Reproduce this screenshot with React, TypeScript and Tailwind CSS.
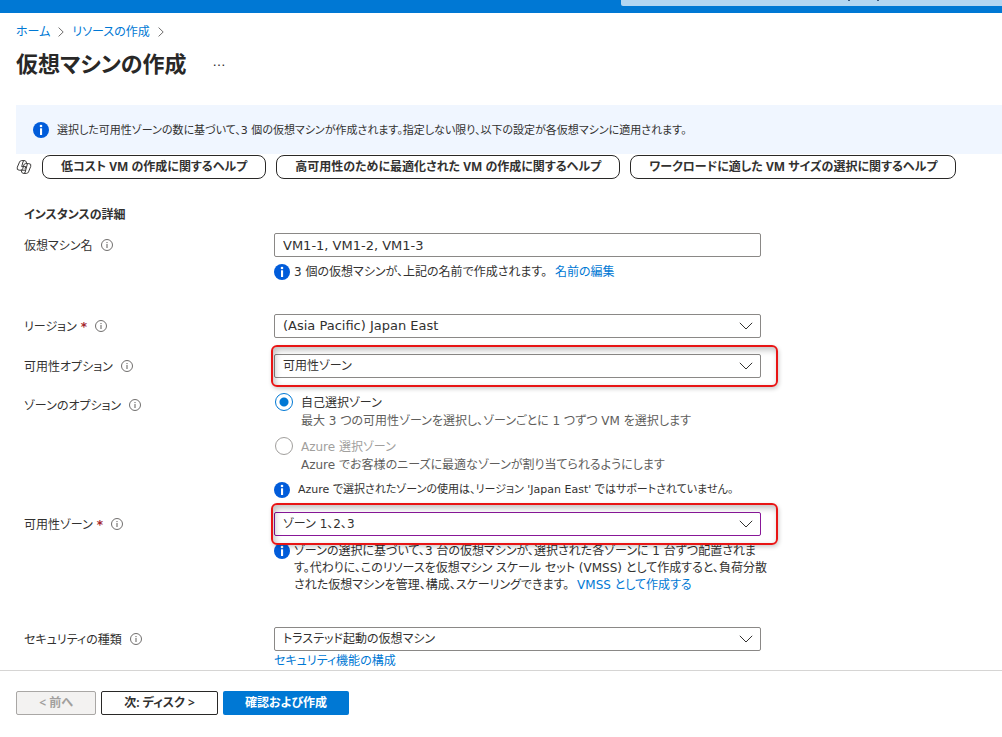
import React from "react";

const link = "text-[#0078d4] hover:underline";
const control =
  "block h-6 w-full appearance-none rounded-[2px] border bg-white px-2 leading-4 text-[#323130] outline-none";

function InfoBadge() {
  return (
    <svg className="size-4 shrink-0" viewBox="0 0 16 16" aria-hidden="true">
      <circle cx="8" cy="8" r="8" fill="#015cda" />
      <circle cx="8" cy="4" r="1.3" fill="#fff" />
      <rect x="7" y="6.3" width="2.1" height="6.7" fill="#fff" />
    </svg>
  );
}

function InfoOutline() {
  return (
    <svg className="size-3 shrink-0" viewBox="0 0 12 12" fill="none" aria-hidden="true">
      <circle cx="6" cy="6" r="5.5" stroke="#605e5c" strokeWidth="0.9" />
      <rect x="5.5" y="5" width="1" height="4" fill="#605e5c" />
      <rect x="5.5" y="3" width="1" height="1.1" fill="#605e5c" />
    </svg>
  );
}

function Chevron() {
  return (
    <svg className="h-2 w-3.5" viewBox="0 0 14 8" fill="none" aria-hidden="true">
      <path d="M0.8 0.8 L7 7 L13.2 0.8" stroke="#323130" strokeWidth="1" />
    </svg>
  );
}

function Crumb() {
  return (
    <svg className="h-2.5 w-1.5" viewBox="0 0 6 10" fill="none" aria-hidden="true">
      <path d="M0.6 0.6 L5.2 5 L0.6 9.4" stroke="#605e5c" strokeWidth="0.9" />
    </svg>
  );
}

function CopilotIcon() {
  return (
    <svg className="size-4 shrink-0" viewBox="0 0 16 16" fill="none" stroke="#3b3a39" strokeWidth="1" strokeLinejoin="round" aria-hidden="true">
      <path d="M10.6 4.4 L10.2 2.9 Q9.8 1.6 8.5 1.6 H5.6 Q4.1 1.6 3.5 3.1 L1.3 8.2 Q0.4 11.2 3.2 11.2 H5.2 L5.7 13 Q6.1 14.4 7.5 14.4 H10.4 Q11.9 14.4 12.5 12.9 L14.7 7.5 Q15.6 4.6 12.8 4.6 H9.6 Q8.3 4.6 7.9 5.9 L6.7 9.8 Q6.3 11.2 5 11.2" />
      <path d="M8.5 1.6 Q7.4 1.6 7 2.9 L5.7 7.6 H9.8 L9 9.8 M7.5 14.4 Q8.8 14.4 9.2 13.1 L11.4 4.8 M5.4 11.2 H9.7" />
    </svg>
  );
}

function Row({ id, label, required, children }: { id: string; label: string; required?: boolean; children: React.ReactNode }) {
  return (
    <div className="grid grid-cols-[250px_minmax(0,1fr)]">
      <div className="flex h-6 items-center">
        <label htmlFor={id} className="pt-0.5">{label}</label>
        {required && <span className="ml-1 pt-0.5 font-bold text-[#a4262c]">*</span>}
        <span className="ml-2">
          <InfoOutline />
        </span>
      </div>
      <div className="min-w-0">{children}</div>
    </div>
  );
}

type SelectProps = { id: string; value: string; active?: boolean; marked?: boolean; large?: boolean };

function Select({ id, value, active, marked, large }: SelectProps) {
  return (
    <div className="relative max-w-[487px]">
      <select
        id={id}
        defaultValue={value}
        className={`${control} ${active ? "border-[#881798]" : "border-[#8a8886]"} ${large ? "text-[13px]" : "text-[12px]"}`}
      >
        <option>{value}</option>
      </select>
      <span className="pointer-events-none absolute top-2 right-2">
        <Chevron />
      </span>
      {marked && (
        <span className="pointer-events-none absolute -top-[9px] -right-[17px] -bottom-[9px] -left-[3px] rounded-[6px] border-2 border-[#e81515] shadow-[1px_2px_4px_rgba(0,0,0,0.2),inset_2px_3px_6px_rgba(0,0,0,0.25)]" />
      )}
    </div>
  );
}

type ZoneOptionProps = { id: string; title: string; detail: string; checked?: boolean; disabled?: boolean };

function ZoneOption({ id, title, detail, checked, disabled }: ZoneOptionProps) {
  return (
    <div className="flex gap-2">
      <input
        id={id}
        type="radio"
        name="zone-option"
        defaultChecked={checked}
        disabled={disabled}
        className="ml-px size-[18px] shrink-0 appearance-none rounded-full border border-[#a19f9d] bg-white checked:border-[#0078d4] checked:bg-[radial-gradient(circle,#0078d4_4px,transparent_5px)]"
      />
      <div className="pt-px">
        <label htmlFor={id} className={`block leading-[18px] ${disabled ? "text-[#a19f9d]" : ""}`}>
          {title}
        </label>
        <p className="leading-[18px] text-[#605e5c]">{detail}</p>
      </div>
    </div>
  );
}

function Pill({ children }: { children: React.ReactNode }) {
  return (
    <button className="flex h-6 items-center rounded-lg border border-[#292827] bg-white px-[18px] pb-0.5 font-['Noto_Sans','Noto_Sans_CJK_JP',sans-serif] text-[12px] font-bold whitespace-nowrap">
      {children}
    </button>
  );
}

export default function App() {
  return (
    <div className="flex min-h-screen flex-col bg-white font-['DejaVu_Sans','Noto_Sans_CJK_JP',sans-serif] text-[12px] leading-[17px] text-[#323130] [font-feature-settings:'palt']">
      <header className="flex h-[13px] justify-end bg-[#0078d4]">
        <div className="flex h-1.5 w-[38%] justify-center rounded-bl-[2px] bg-[#b3d6f2] pl-[104px]">
          <svg className="h-1 w-8" viewBox="0 0 32 4" aria-hidden="true">
            <path d="M0 0H2V1H0Z M29 0H31V1H29Z" fill="#3b5d86" />
          </svg>
        </div>
      </header>

      <main className="flex-1 pl-4">
        <nav className="flex h-9 items-center gap-2 pt-0.5">
          <a href="#home" className={link}>ホーム</a>
          <Crumb />
          <a href="#create" className={link}>リソースの作成</a>
          <Crumb />
        </nav>
        <div className="flex h-8 items-center gap-[26px]">
          <h1 className="text-[22px] leading-8 font-bold text-[#292827]">仮想マシンの作成</h1>
          <button aria-label="その他" className="pb-2 text-[13px]">…</button>
        </div>

        <div className="mt-6 flex h-[49px] items-center gap-2 bg-[#f0f6ff] pl-[17px]">
          <InfoBadge />
          <p className="pt-0.5 text-[11px]">
            選択した可用性ゾーンの数に基づいて、3 個の仮想マシンが作成されます。指定しない限り、以下の設定が各仮想マシンに適用されます。
          </p>
        </div>

        <div className="mt-px flex items-center gap-2.5">
          <CopilotIcon />
          <Pill>低コスト VM の作成に関するヘルプ</Pill>
          <Pill>高可用性のために最適化された VM の作成に関するヘルプ</Pill>
          <Pill>ワークロードに適した VM サイズの選択に関するヘルプ</Pill>
        </div>

        <form className="pt-6 pl-2">
          <h2 className="h-[30px] leading-6 font-bold">インスタンスの詳細</h2>
          <Row id="name" label="仮想マシン名">
            <input
              id="name"
              defaultValue="VM1-1, VM1-2, VM1-3"
              className={`${control} max-w-[487px] border-[#8a8886] text-[13px]`}
            />
            <div className="mt-1.5 flex h-[18px] items-center gap-1">
              <InfoBadge />
              <p>
                3 個の仮想マシンが、上記の名前で作成されます。 <a href="#names" className={`${link} ml-1`}>名前の編集</a>
              </p>
            </div>
          </Row>
          <div className="mt-[33px]">
            <Row id="region" label="リージョン" required>
              <Select id="region" value="(Asia Pacific) Japan East" large />
            </Row>
          </div>
          <div className="mt-4">
            <Row id="availability" label="可用性オプション">
              <Select id="availability" value="可用性ゾーン" marked />
            </Row>
          </div>
          <div className="mt-[15px]">
            <Row id="self-zone" label="ゾーンのオプション">
              <div className="flex flex-col gap-[7px]">
                <ZoneOption
                  id="self-zone"
                  title="自己選択ゾーン"
                  detail="最大 3 つの可用性ゾーンを選択し、ゾーンごとに 1 つずつ VM を選択します"
                  checked
                />
                <ZoneOption
                  id="azure-zone"
                  title="Azure 選択ゾーン"
                  detail="Azure でお客様のニーズに最適なゾーンが割り当てられるようにします"
                  disabled
                />
                <div className="flex items-center gap-2">
                  <InfoBadge />
                  <p className="text-[11px]">Azure で選択されたゾーンの使用は、リージョン 'Japan East' ではサポートされていません。</p>
                </div>
              </div>
            </Row>
          </div>
          <div className="mt-3.5">
            <Row id="zones" label="可用性ゾーン" required>
              <Select id="zones" value="ゾーン 1、2、3" active marked />
              <div className="mt-[7px] flex gap-1">
                <InfoBadge />
                <p className="whitespace-nowrap">
                  ゾーンの選択に基づいて、3 台の仮想マシンが、選択された各ゾーンに 1 台ずつ配置されま
                  <br />
                  す。代わりに、このリソースを仮想マシン スケール セット (VMSS) として作成すると、負荷分散
                  <br />
                  された仮想マシンを管理、構成、スケーリングできます。 <a href="#vmss" className={`${link} ml-1`}>VMSS として作成する</a>
                </p>
              </div>
            </Row>
          </div>
          <div className="mt-[33px]">
            <Row id="security" label="セキュリティの種類">
              <Select id="security" value="トラステッド起動の仮想マシン" />
              <a href="#security-features" className={`${link} mt-0.5 block`}>セキュリティ機能の構成</a>
            </Row>
          </div>
        </form>
      </main>

      <footer className="flex h-[67px] gap-[5px] border-t border-[#d6d5d4] bg-white pt-5 pl-4 font-['Noto_Sans','Noto_Sans_CJK_JP',sans-serif] font-semibold">
        <button disabled className="h-6 w-20 rounded-[2px] border border-[#a9a7a5] bg-[#f3f2f1] pb-0.5 text-[#a19f9d]">
          &lt; 前へ
        </button>
        <button className="h-6 w-[117px] rounded-[2px] border border-[#292827] bg-white pb-0.5">
          次: ディスク &gt;
        </button>
        <button className="h-6 w-[126px] rounded-[2px] bg-[#0078d4] pb-0.5 text-white">
          確認および作成
        </button>
      </footer>
    </div>
  );
}
